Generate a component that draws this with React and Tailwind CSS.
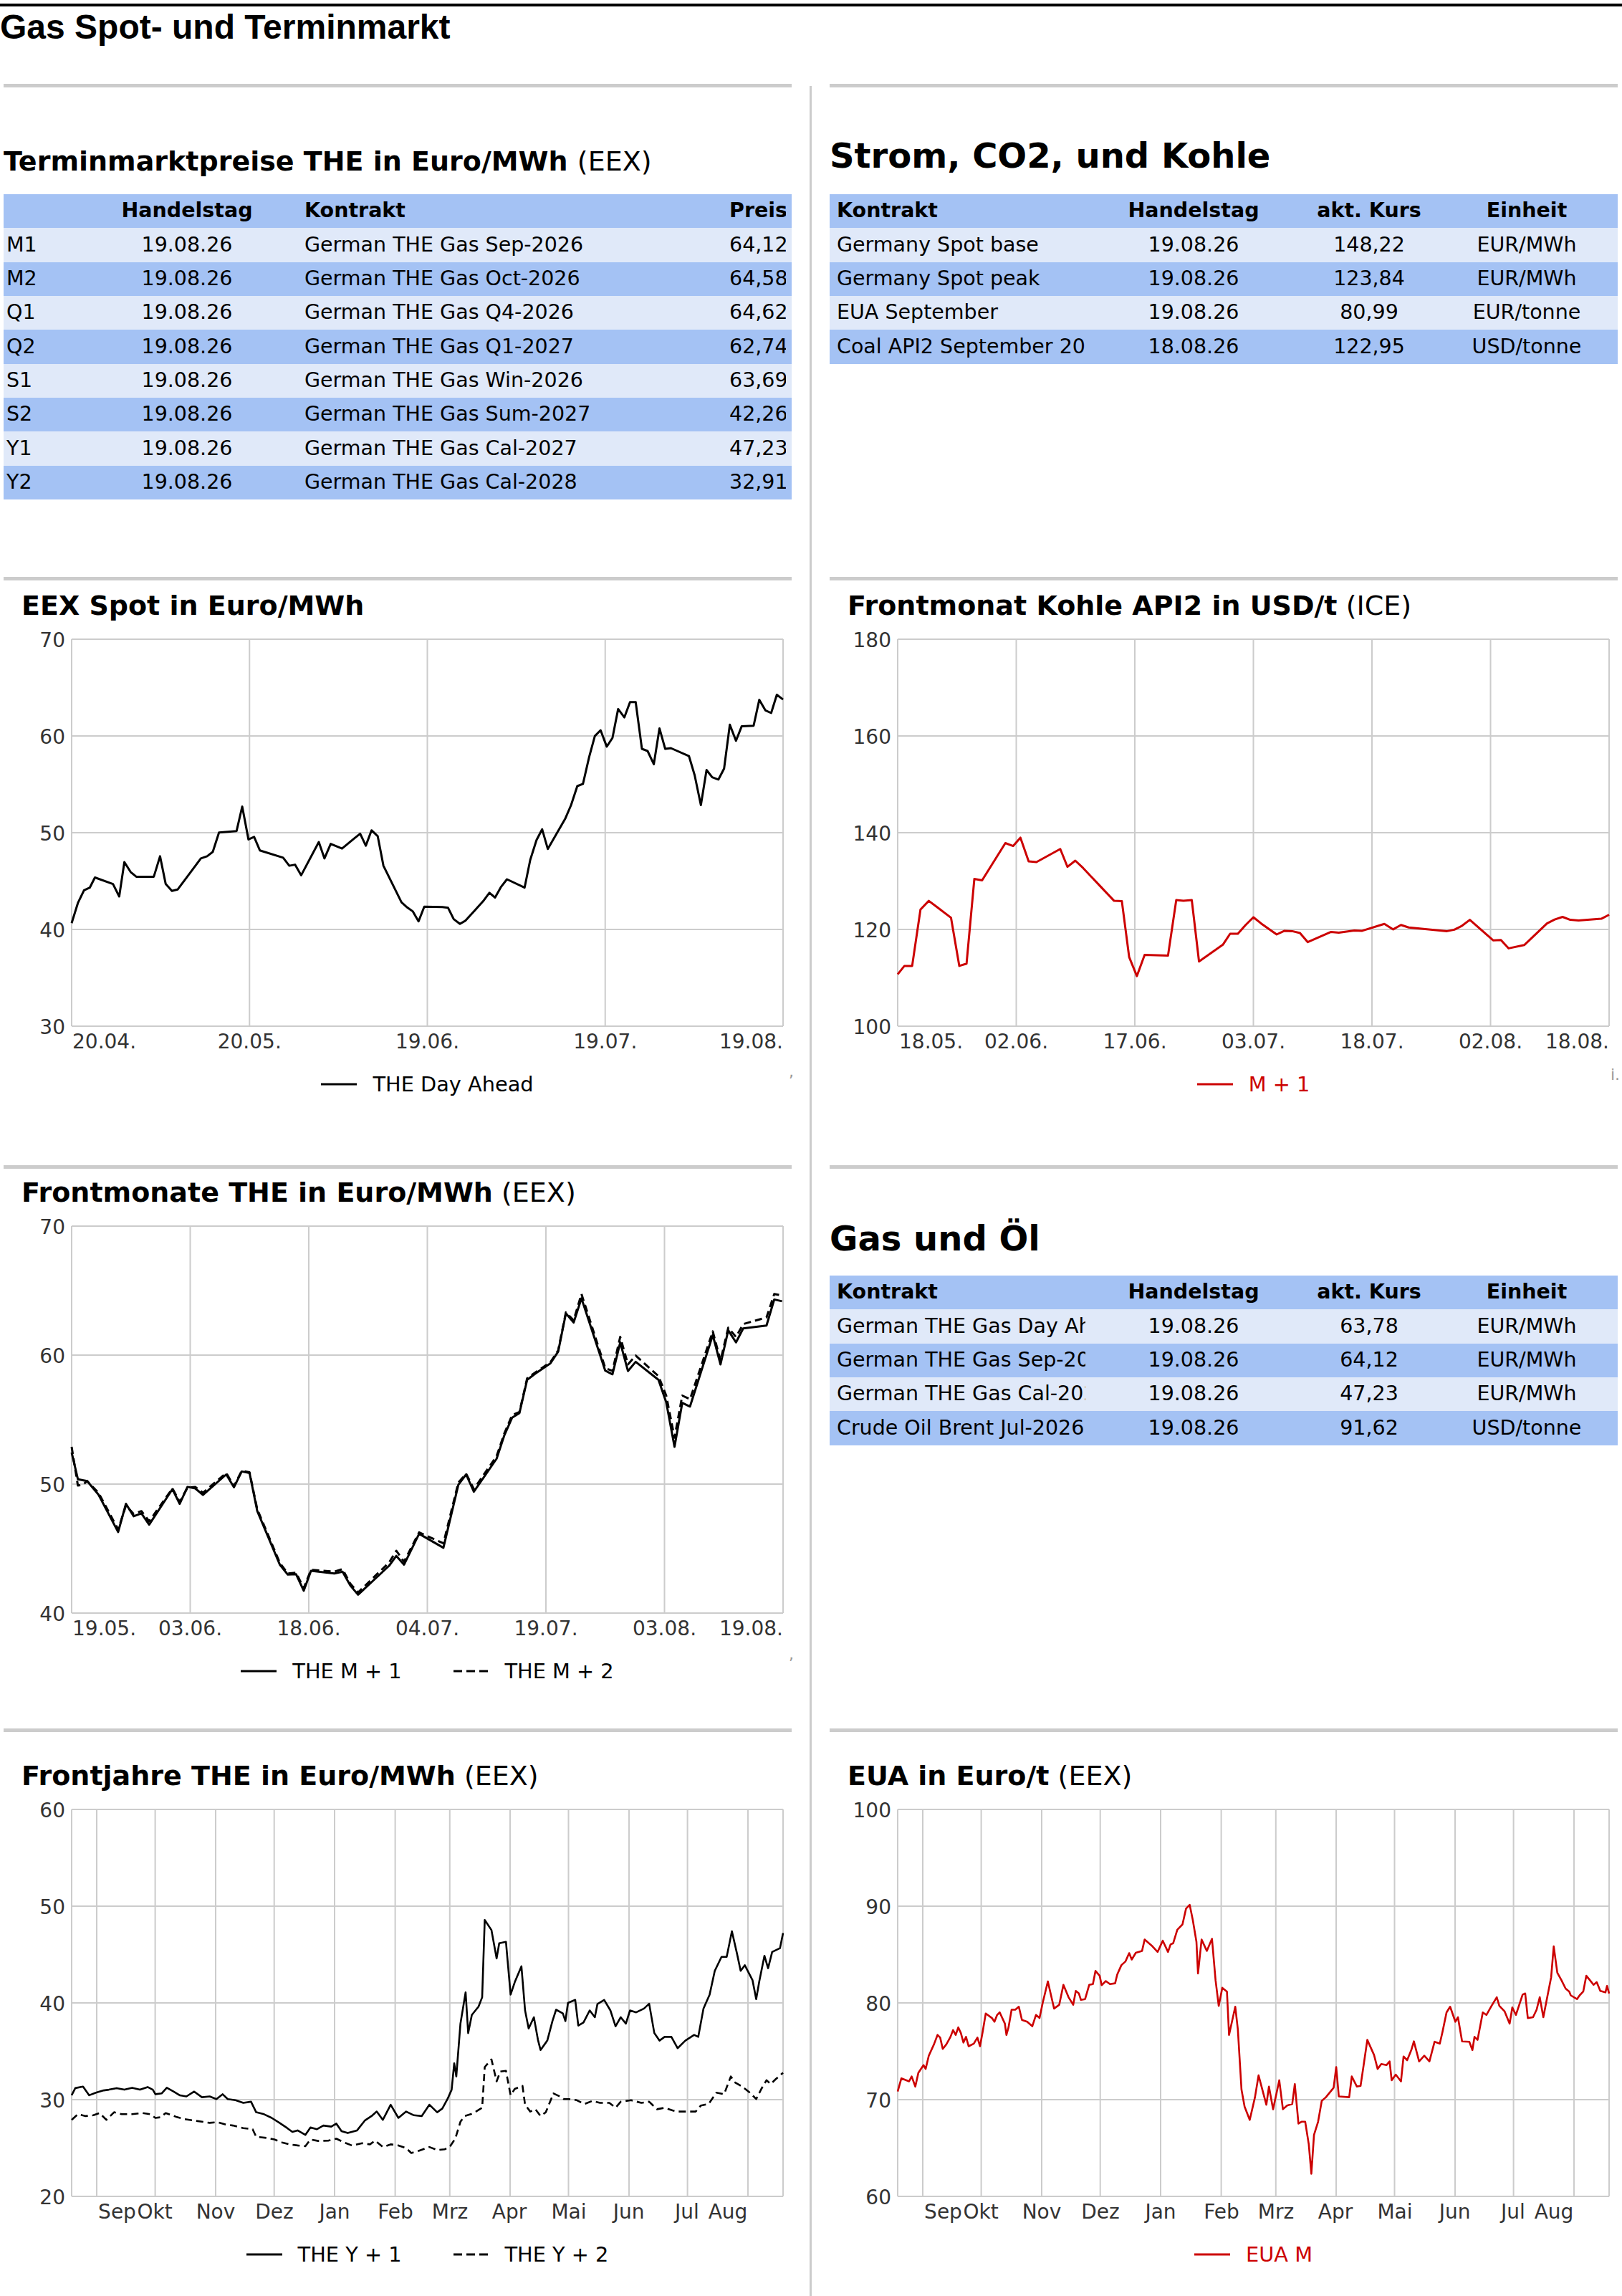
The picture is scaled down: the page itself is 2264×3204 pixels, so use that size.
import React from 'react';

const GRID = '#cccccc';
const RED = '#cc0000';
const BOX = { l: 95, r: 1088, t: 25, b: 565 };

function mapPoints(points, cal) {
  const [zL, zR, zT, zB] = cal;
  return points
    .map(([zx, zy]) => {
      const x = BOX.l + ((zx - zL) / (zR - zL)) * (BOX.r - BOX.l);
      const y = BOX.t + ((zy - zT) / (zB - zT)) * (BOX.b - BOX.t);
      return `${x.toFixed(1)},${y.toFixed(1)}`;
    })
    .join(' ');
}

function Chart({ title, source, yTicks, xGrid, xLabels, series, legend, mark, svgHeight = 612 }) {
  const vMax = yTicks[0];
  const vMin = yTicks[yTicks.length - 1];
  const yOf = (v) => BOX.t + ((vMax - v) / (vMax - vMin)) * (BOX.b - BOX.t);
  return (
    <div>
      <h3 className="pl-[25px] text-[38px] leading-[44px] font-bold whitespace-nowrap">
        {title}
        {source && <span className="font-normal"> {source}</span>}
      </h3>
      <svg width="1100" height={svgHeight} className="block overflow-visible" fontFamily="DejaVu Sans, sans-serif">
        {yTicks.map((v) => (
          <line key={'h' + v} x1={BOX.l} x2={BOX.r} y1={yOf(v)} y2={yOf(v)} stroke={GRID} strokeWidth="2" />
        ))}
        <line x1={BOX.l} x2={BOX.l} y1={BOX.t} y2={BOX.b} stroke={GRID} strokeWidth="2" />
        <line x1={BOX.r} x2={BOX.r} y1={BOX.t} y2={BOX.b} stroke={GRID} strokeWidth="2" />
        {xGrid.map((x) => (
          <line key={'v' + x} x1={x} x2={x} y1={BOX.t} y2={BOX.b} stroke={GRID} strokeWidth="2" />
        ))}
        {yTicks.map((v) => (
          <text key={'yl' + v} x="86" y={yOf(v) + 11} textAnchor="end" fontSize="28" fill="#333333">
            {v}
          </text>
        ))}
        {xLabels.map(([x, label, anchor]) => (
          <text key={'xl' + label} x={x} y={BOX.b + 31} textAnchor={anchor || 'middle'} fontSize="28" fill="#333333">
            {label}
          </text>
        ))}
        {series.map((s, i) => (
          <polyline
            key={'s' + i}
            points={mapPoints(s.points, s.cal)}
            fill="none"
            stroke={s.color}
            strokeWidth={s.width || 3}
            strokeLinejoin="round"
            strokeDasharray={s.dashed ? '10 6' : undefined}
          />
        ))}
        {mark && (
          <text x={mark[0]} y={mark[1]} fontSize="22" fill="#999999">
            {mark[2]}
          </text>
        )}
      </svg>
      <div className="ml-[95px] w-[993px] mt-[17px] flex justify-center gap-[72px]">
        {legend.map((item) => (
          <div key={item.label} className="flex items-center gap-[22px]">
            <svg width="50" height="6" className="block">
              <line
                x1="0"
                x2="50"
                y1="3"
                y2="3"
                stroke={item.color}
                strokeWidth="3"
                strokeDasharray={item.dashed ? '12 6' : undefined}
              />
            </svg>
            <span className={'text-[28.8px] leading-[34px] whitespace-nowrap ' + item.textClass}>{item.label}</span>
          </div>
        ))}
      </div>
    </div>
  );
}

/* ---------- data ---------- */

const spotPts = [
  [138, 995], [150, 940], [162, 905], [173, 898], [183, 870], [218, 888], [230, 922], [240, 828], [252, 855],
  [263, 868], [297, 868], [309, 812], [320, 888], [332, 907], [343, 903], [388, 818], [400, 812], [411, 800],
  [423, 747], [457, 743], [468, 676], [480, 766], [491, 759], [502, 796], [547, 816], [559, 838], [570, 835],
  [582, 864], [616, 773], [627, 818], [639, 778], [661, 791], [684, 764], [696, 750], [707, 783], [718, 741],
  [730, 757], [741, 838], [776, 938], [787, 952], [798, 963], [809, 990], [820, 950], [855, 951], [866, 953],
  [877, 984], [889, 997], [900, 988], [934, 935], [946, 912], [957, 925], [968, 897], [980, 875], [1014, 898],
  [1025, 822], [1037, 768], [1048, 738], [1059, 792], [1093, 708], [1104, 672], [1116, 620], [1127, 614],
  [1139, 540], [1150, 483], [1161, 467], [1173, 512], [1184, 488], [1195, 409], [1207, 432], [1218, 390],
  [1229, 390], [1241, 518], [1252, 524], [1264, 560], [1275, 462], [1286, 518], [1297, 516], [1332, 538],
  [1343, 590], [1355, 672], [1366, 576], [1377, 596], [1389, 602], [1400, 572], [1411, 452], [1423, 496],
  [1434, 456], [1457, 455], [1468, 384], [1480, 413], [1491, 420], [1502, 370], [1514, 383],
];

const coalPts = [
  [168, 1135], [181, 1112], [196, 1112], [212, 958], [228, 934], [243, 950], [271, 980], [287, 1112], [301, 1106],
  [316, 874], [331, 878], [376, 776], [391, 784], [405, 761], [421, 826], [436, 828], [482, 792], [496, 841],
  [511, 824], [526, 844], [586, 934], [601, 935], [615, 1088], [630, 1140], [645, 1082], [690, 1084], [706, 932],
  [720, 934], [736, 932], [750, 1100], [796, 1054], [810, 1024], [825, 1024], [840, 1000], [855, 979], [870, 996],
  [900, 1026], [915, 1016], [930, 1017], [945, 1022], [960, 1047], [1005, 1019], [1020, 1021], [1050, 1015],
  [1065, 1016], [1108, 997], [1125, 1012], [1140, 1000], [1155, 1007], [1229, 1017], [1243, 1013], [1258, 1002],
  [1273, 986], [1318, 1042], [1333, 1041], [1348, 1064], [1378, 1055], [1393, 1035], [1422, 996], [1437, 985],
  [1452, 978], [1467, 986], [1483, 988], [1527, 983], [1542, 972],
];

const m1Pts = [
  [138, 830], [150, 903], [168, 908], [190, 945], [228, 1047], [243, 970], [258, 1004], [273, 996], [288, 1027],
  [333, 930], [347, 970], [362, 924], [377, 928], [392, 946], [437, 890], [452, 925], [467, 882], [482, 886],
  [497, 990], [541, 1137], [556, 1163], [572, 1162], [587, 1207], [601, 1153], [646, 1160], [662, 1155],
  [677, 1193], [692, 1218], [752, 1139], [766, 1112], [781, 1136], [810, 1052], [857, 1090], [886, 918],
  [901, 890], [916, 937], [960, 847], [975, 783], [990, 735], [1004, 723], [1019, 632], [1035, 615], [1064, 587],
  [1079, 555], [1094, 451], [1109, 476], [1124, 410], [1170, 607], [1184, 617], [1199, 530], [1214, 608],
  [1229, 583], [1273, 632], [1288, 693], [1304, 815], [1319, 695], [1334, 705], [1378, 510], [1393, 590],
  [1408, 497], [1423, 530], [1437, 492], [1482, 484], [1497, 413], [1512, 418],
];

const m2Pts = [
  [138, 815], [150, 920], [160, 918], [168, 908], [190, 940], [228, 1040], [243, 975], [258, 998], [273, 990],
  [288, 1018], [333, 928], [347, 965], [362, 926], [377, 924], [392, 940], [437, 886], [452, 922], [467, 880],
  [482, 884], [497, 985], [541, 1132], [556, 1160], [572, 1158], [587, 1200], [601, 1150], [646, 1155],
  [662, 1148], [677, 1188], [692, 1212], [752, 1130], [766, 1098], [781, 1128], [810, 1048], [857, 1078],
  [886, 912], [901, 888], [916, 930], [960, 840], [975, 778], [990, 728], [1004, 720], [1019, 628], [1035, 612],
  [1064, 584], [1079, 552], [1094, 448], [1109, 470], [1124, 398], [1170, 600], [1184, 608], [1199, 515],
  [1214, 590], [1229, 566], [1273, 622], [1288, 675], [1304, 790], [1319, 675], [1334, 685], [1378, 500],
  [1393, 580], [1408, 490], [1423, 515], [1437, 480], [1482, 462], [1497, 398], [1512, 402],
];

const y1Pts = [
  [138, 1035], [145, 1016], [160, 1012], [172, 1035], [185, 1028], [200, 1022], [210, 1020], [225, 1016],
  [240, 1020], [255, 1015], [270, 1020], [285, 1013], [295, 1020], [300, 1032], [312, 1030], [322, 1015],
  [335, 1025], [347, 1035], [360, 1038], [375, 1025], [390, 1040], [405, 1038], [418, 1045], [430, 1032],
  [440, 1045], [455, 1048], [470, 1055], [485, 1052], [495, 1080], [510, 1085], [525, 1095], [540, 1108],
  [555, 1122], [565, 1132], [575, 1128], [590, 1140], [600, 1120], [612, 1125], [625, 1115], [640, 1118],
  [650, 1110], [660, 1130], [672, 1135], [690, 1128], [705, 1102], [718, 1090], [728, 1078], [740, 1100],
  [755, 1060], [770, 1095], [785, 1078], [800, 1088], [815, 1090], [830, 1060], [845, 1080], [855, 1070],
  [865, 1045], [873, 1020], [878, 950], [882, 985], [890, 845], [900, 762], [905, 870], [912, 822], [925, 800],
  [932, 775], [937, 570], [950, 597], [960, 672], [965, 632], [978, 628], [987, 768], [995, 735], [1008, 693],
  [1015, 810], [1022, 858], [1032, 828], [1040, 888], [1045, 915], [1058, 890], [1068, 838], [1075, 808],
  [1088, 818], [1093, 838], [1098, 790], [1112, 782], [1118, 850], [1128, 842], [1140, 810], [1150, 828],
  [1155, 793], [1168, 782], [1180, 810], [1190, 852], [1200, 828], [1210, 845], [1218, 810], [1230, 815],
  [1245, 805], [1255, 792], [1265, 870], [1275, 890], [1285, 880], [1298, 880], [1310, 910], [1325, 890],
  [1342, 875], [1350, 880], [1360, 805], [1372, 768], [1382, 705], [1395, 668], [1405, 668], [1415, 600],
  [1425, 660], [1432, 705], [1440, 690], [1455, 730], [1462, 780], [1468, 733], [1478, 665], [1485, 698],
  [1493, 655], [1508, 645], [1514, 605],
];

const y2Pts = [
  [138, 1100], [150, 1085], [165, 1090], [180, 1088], [192, 1082], [205, 1100], [220, 1080], [235, 1085],
  [255, 1085], [275, 1082], [290, 1085], [300, 1095], [310, 1093], [320, 1082], [340, 1092], [355, 1098],
  [375, 1102], [390, 1105], [405, 1108], [420, 1106], [435, 1112], [450, 1115], [470, 1122], [488, 1125],
  [495, 1145], [515, 1148], [530, 1152], [545, 1160], [560, 1165], [575, 1168], [590, 1170], [600, 1152],
  [615, 1156], [635, 1155], [650, 1150], [665, 1160], [680, 1168], [700, 1162], [715, 1165], [725, 1155],
  [740, 1172], [755, 1165], [770, 1168], [785, 1175], [795, 1188], [810, 1182], [830, 1172], [845, 1180],
  [860, 1178], [870, 1170], [880, 1150], [890, 1105], [898, 1090], [910, 1085], [920, 1078], [932, 1068],
  [937, 960], [950, 940], [960, 998], [967, 972], [978, 970], [987, 1035], [995, 1018], [1010, 1010],
  [1015, 1060], [1025, 1078], [1035, 1072], [1045, 1090], [1055, 1080], [1070, 1030], [1082, 1038],
  [1090, 1045], [1100, 1045], [1115, 1048], [1130, 1058], [1145, 1050], [1160, 1055], [1178, 1055],
  [1190, 1068], [1200, 1052], [1220, 1048], [1240, 1055], [1255, 1052], [1270, 1072], [1285, 1068],
  [1300, 1075], [1310, 1078], [1345, 1078], [1355, 1062], [1370, 1058], [1385, 1028], [1400, 1032],
  [1413, 985], [1420, 1000], [1435, 1012], [1450, 1028], [1462, 1045], [1472, 1018], [1482, 995], [1490, 1005],
  [1500, 992], [1514, 975],
];

const euaPts = [
  [168, 1025], [175, 990], [190, 998], [195, 985], [202, 1012], [208, 975], [218, 955], [222, 965], [228, 930],
  [238, 900], [245, 875], [250, 882], [255, 912], [262, 900], [270, 880], [275, 862], [280, 875], [285, 855],
  [290, 870], [295, 895], [300, 880], [305, 905], [315, 898], [322, 882], [327, 905], [332, 868], [338, 818],
  [350, 830], [355, 840], [360, 822], [365, 815], [375, 845], [378, 875], [382, 855], [388, 808], [395, 808],
  [402, 800], [408, 835], [418, 840], [428, 852], [435, 822], [442, 830], [448, 790], [458, 733], [470, 805],
  [480, 795], [488, 742], [498, 775], [507, 795], [512, 758], [518, 765], [522, 782], [530, 780], [538, 742],
  [545, 740], [550, 705], [558, 718], [562, 743], [570, 732], [578, 740], [588, 738], [592, 715], [600, 690],
  [608, 680], [615, 658], [620, 675], [628, 657], [640, 652], [645, 622], [660, 640], [670, 655], [680, 625],
  [690, 655], [695, 635], [700, 632], [708, 596], [718, 582], [725, 540], [732, 530], [738, 570], [745, 628],
  [748, 712], [755, 622], [765, 652], [775, 620], [782, 730], [788, 798], [795, 750], [804, 760], [808, 875],
  [820, 800], [825, 860], [832, 1020], [838, 1065], [848, 1100], [858, 1040], [865, 982], [880, 1060],
  [885, 1012], [893, 1072], [905, 995], [912, 1072], [920, 1062], [930, 1058], [935, 1005], [942, 1110],
  [948, 1105], [955, 1105], [962, 1165], [967, 1243], [972, 1140], [980, 1105], [987, 1050], [995, 1040],
  [1010, 1015], [1015, 960], [1020, 1038], [1040, 1040], [1045, 985], [1055, 1012], [1062, 1010], [1068, 955],
  [1075, 888], [1088, 928], [1095, 965], [1102, 952], [1112, 955], [1118, 945], [1122, 995], [1130, 980],
  [1140, 998], [1145, 932], [1152, 942], [1160, 915], [1165, 892], [1175, 945], [1185, 930], [1195, 945],
  [1205, 893], [1215, 898], [1220, 868], [1228, 815], [1235, 800], [1245, 840], [1250, 828], [1258, 892],
  [1272, 893], [1278, 915], [1282, 880], [1288, 888], [1298, 815], [1305, 822], [1315, 798], [1325, 775],
  [1330, 798], [1340, 812], [1350, 845], [1355, 802], [1362, 822], [1375, 768], [1380, 765], [1385, 830],
  [1395, 828], [1402, 808], [1408, 775], [1415, 828], [1422, 778], [1430, 722], [1435, 640], [1442, 710],
  [1450, 730], [1458, 752], [1465, 760], [1468, 770], [1480, 780], [1485, 770], [1492, 760], [1498, 718],
  [1505, 730], [1512, 742], [1518, 735], [1525, 758], [1535, 762], [1538, 745], [1542, 765],
];

const monthGrid = [130, 211.6, 296, 377.7, 462, 546.6, 622.8, 707, 788.5, 873, 954.6, 1039];
const monthLabels = [
  [158.5, 'Sep'], [211, 'Okt'], [296, 'Nov'], [378, 'Dez'], [462, 'Jan'], [547, 'Feb'], [623, 'Mrz'],
  [706, 'Apr'], [789, 'Mai'], [872.5, 'Jun'], [954, 'Jul'], [1011, 'Aug'],
];
const g7 = [95, 260.5, 426, 591.5, 757, 922.5, 1088];

/* ---------- tables ---------- */

const leftRows = [
  ['M1', 'German THE Gas Sep-2026', '64,12'],
  ['M2', 'German THE Gas Oct-2026', '64,58'],
  ['Q1', 'German THE Gas Q4-2026', '64,62'],
  ['Q2', 'German THE Gas Q1-2027', '62,74'],
  ['S1', 'German THE Gas Win-2026', '63,69'],
  ['S2', 'German THE Gas Sum-2027', '42,26'],
  ['Y1', 'German THE Gas Cal-2027', '47,23'],
  ['Y2', 'German THE Gas Cal-2028', '32,91'],
];

const stromRows = [
  ['Germany Spot base', '19.08.26', '148,22', 'EUR/MWh'],
  ['Germany Spot peak', '19.08.26', '123,84', 'EUR/MWh'],
  ['EUA September', '19.08.26', '80,99', 'EUR/tonne'],
  ['Coal API2 September 2026', '18.08.26', '122,95', 'USD/tonne'],
];

const gasRows = [
  ['German THE Gas Day Ahead', '19.08.26', '63,78', 'EUR/MWh'],
  ['German THE Gas Sep-2026', '19.08.26', '64,12', 'EUR/MWh'],
  ['German THE Gas Cal-2027', '19.08.26', '47,23', 'EUR/MWh'],
  ['Crude Oil Brent Jul-2026', '19.08.26', '91,62', 'USD/tonne'],
];

function rowBg(i) {
  return i % 2 === 0 ? 'bg-[#e0e9f9]' : 'bg-[#a4c2f4]';
}

function LeftTable() {
  const cols = 'grid grid-cols-[140px_232px_633px_95px] h-[47.33px] items-center text-[28.5px] whitespace-nowrap';
  return (
    <div className="w-[1100px]">
      <div className={cols + ' bg-[#a4c2f4] font-bold'}>
        <div className="pl-[4px]"></div>
        <div className="text-center">Handelstag</div>
        <div className="pl-[48px]">Kontrakt</div>
        <div className="pl-[8px] pr-[8px]">
          <div className="overflow-hidden">Preis</div>
        </div>
      </div>
      {leftRows.map((r, i) => (
        <div key={r[0]} className={cols + ' ' + rowBg(i)}>
          <div className="pl-[4px]">{r[0]}</div>
          <div className="text-center">19.08.26</div>
          <div className="pl-[48px]">{r[1]}</div>
          <div className="pl-[8px] pr-[8px]">
            <div className="overflow-hidden">{r[2]}</div>
          </div>
        </div>
      ))}
    </div>
  );
}

function RightTable({ rows }) {
  const cols = 'grid grid-cols-[367px_282px_208px_243px] h-[47.33px] items-center text-[28.5px] whitespace-nowrap';
  return (
    <div className="w-[1100px]">
      <div className={cols + ' bg-[#a4c2f4] font-bold'}>
        <div className="pl-[10px] pr-[10px]">
          <div className="overflow-hidden">Kontrakt</div>
        </div>
        <div className="text-center">Handelstag</div>
        <div className="text-center">akt. Kurs</div>
        <div className="text-center pr-[11px]">Einheit</div>
      </div>
      {rows.map((r, i) => (
        <div key={r[0]} className={cols + ' ' + rowBg(i)}>
          <div className="pl-[10px] pr-[10px]">
            <div className="overflow-hidden">{r[0]}</div>
          </div>
          <div className="text-center">{r[1]}</div>
          <div className="text-center">{r[2]}</div>
          <div className="text-center pr-[11px]">{r[3]}</div>
        </div>
      ))}
    </div>
  );
}

export default function App() {
  return (
    <div className="w-[2264px] min-h-[3204px] bg-white text-black font-['DejaVu_Sans',sans-serif]">
      <div className="mt-[5px] border-t-4 border-black">
        <h1 className="pt-[1px] font-['Liberation_Sans',Arial,sans-serif] font-bold text-[48px] leading-[55px]">
          Gas Spot- und Terminmarkt
        </h1>
      </div>

      <div className="mt-[52px] ml-[5px] grid grid-cols-[1100px_53px_1100px] grid-rows-[688px_821px_786px_792px]">
        <div className="col-start-2 row-start-1 row-span-4 flex justify-center pt-[3px]">
          <div className="w-[3px] h-full bg-[#cccccc]"></div>
        </div>

        {/* Row 1 */}
        <div className="col-start-1 row-start-1 border-t-[5px] border-[#cccccc] pt-[81px]">
          <h3 className="text-[38px] leading-[44px] font-bold whitespace-nowrap">
            Terminmarktpreise THE in Euro/MWh <span className="font-normal">(EEX)</span>
          </h3>
          <div className="mt-[24px]">
            <LeftTable />
          </div>
        </div>
        <div className="col-start-3 row-start-1 border-t-[5px] border-[#cccccc] pt-[67px]">
          <h2 className="text-[48px] leading-[56px] font-bold">Strom, CO2, und Kohle</h2>
          <div className="mt-[26px]">
            <RightTable rows={stromRows} />
          </div>
        </div>

        {/* Row 2 */}
        <div className="col-start-1 row-start-2 border-t-[5px] border-[#cccccc] pt-[13px]">
          <Chart
            title="EEX Spot in Euro/MWh"
            yTicks={[70, 60, 50, 40, 30]}
            xGrid={[343.25, 591.5, 839.75]}
            xLabels={[
              [96, '20.04.', 'start'],
              [343.25, '20.05.'],
              [591.5, '19.06.'],
              [839.75, '19.07.'],
              [1088, '19.08.', 'end'],
            ]}
            series={[{ points: spotPts, cal: [138, 1514, 218, 1277], color: '#000000' }]}
            legend={[{ label: 'THE Day Ahead', color: '#000000', textClass: 'text-black' }]}
            mark={[1096, 636, ',']}
          />
        </div>
        <div className="col-start-3 row-start-2 border-t-[5px] border-[#cccccc] pt-[13px]">
          <Chart
            title="Frontmonat Kohle API2 in USD/t"
            source="(ICE)"
            yTicks={[180, 160, 140, 120, 100]}
            xGrid={g7.slice(1, 6)}
            xLabels={[
              [97, '18.05.', 'start'],
              [260.5, '02.06.'],
              [426, '17.06.'],
              [591.5, '03.07.'],
              [757, '18.07.'],
              [922.5, '02.08.'],
              [1088, '18.08.', 'end'],
            ]}
            series={[{ points: coalPts, cal: [168, 1542, 218, 1277], color: RED }]}
            legend={[{ label: 'M + 1', color: RED, textClass: 'text-[#cc0000]' }]}
            mark={[1090, 640, 'i.']}
          />
        </div>

        {/* Row 3 */}
        <div className="col-start-1 row-start-3 border-t-[5px] border-[#cccccc] pt-[11px]">
          <Chart
            title="Frontmonate THE in Euro/MWh"
            source="(EEX)"
            yTicks={[70, 60, 50, 40]}
            xGrid={g7.slice(1, 6)}
            xLabels={[
              [96, '19.05.', 'start'],
              [260.5, '03.06.'],
              [426, '18.06.'],
              [591.5, '04.07.'],
              [757, '19.07.'],
              [922.5, '03.08.'],
              [1088, '19.08.', 'end'],
            ]}
            series={[
              { points: m2Pts, cal: [138, 1514, 213, 1268], color: '#000000', dashed: true },
              { points: m1Pts, cal: [138, 1514, 213, 1268], color: '#000000' },
            ]}
            legend={[
              { label: 'THE M + 1', color: '#000000', textClass: 'text-black' },
              { label: 'THE M + 2', color: '#000000', textClass: 'text-black', dashed: true },
            ]}
            mark={[1096, 630, ',']}
          />
        </div>
        <div className="col-start-3 row-start-3 border-t-[5px] border-[#cccccc] pt-[69px]">
          <h2 className="text-[48px] leading-[56px] font-bold">Gas und Öl</h2>
          <div className="mt-[24px]">
            <RightTable rows={gasRows} />
          </div>
        </div>

        {/* Row 4 */}
        <div className="col-start-1 row-start-4 border-t-[5px] border-[#cccccc] pt-[39px]">
          <Chart
            title="Frontjahre THE in Euro/MWh"
            source="(EEX)"
            yTicks={[60, 50, 40, 30, 20]}
            xGrid={monthGrid}
            xLabels={monthLabels}
            series={[
              { points: y2Pts, cal: [138, 1514, 277, 1303], color: '#000000', dashed: true, width: 2.6 },
              { points: y1Pts, cal: [138, 1514, 277, 1303], color: '#000000', width: 2.6 },
            ]}
            legend={[
              { label: 'THE Y + 1', color: '#000000', textClass: 'text-black' },
              { label: 'THE Y + 2', color: '#000000', textClass: 'text-black', dashed: true },
            ]}
          />
        </div>
        <div className="col-start-3 row-start-4 border-t-[5px] border-[#cccccc] pt-[39px]">
          <Chart
            title="EUA in Euro/t"
            source="(EEX)"
            yTicks={[100, 90, 80, 70, 60]}
            xGrid={monthGrid}
            xLabels={monthLabels}
            series={[{ points: euaPts, cal: [168, 1542, 277, 1303], color: RED, width: 2.6 }]}
            legend={[{ label: 'EUA M', color: RED, textClass: 'text-[#cc0000]' }]}
          />
        </div>
      </div>
    </div>
  );
}
